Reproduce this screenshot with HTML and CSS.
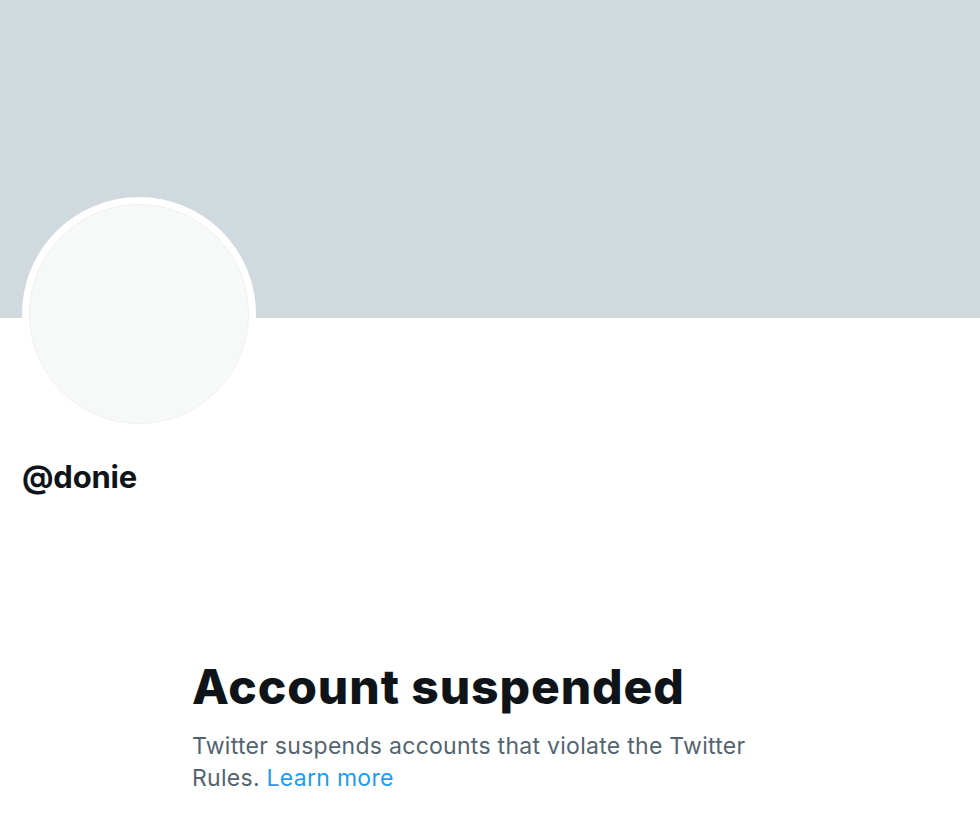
FILE: index.html
```html
<!DOCTYPE html>
<html lang="en">
<head>
<meta charset="utf-8">
<title>@donie</title>
<link rel="stylesheet" href="styles.css">
</head>
<body>
<div class="page">
  <div class="banner"></div>
  <div class="profile">
    <div class="avatar"><div class="avatar-inner"></div></div>
    <div class="handle">@donie</div>
  </div>
  <div class="empty">
    <h1 class="empty-title">Account suspended</h1>
    <p class="empty-text">Twitter suspends accounts that violate the Twitter Rules. <a class="link" href="#">Learn more</a></p>
  </div>
</div>
</body>
</html>
```
FILE: styles.css
```css
html, body {
  margin: 0;
  padding: 0;
  background: #ffffff;
}
.page {
  width: 980px;
  height: 840px;
  overflow: hidden;
  font-family: Inter, "Liberation Sans", sans-serif;
}
.banner {
  height: 318px;
  background: #cfd9de;
}
.profile {
  padding-left: 22px;
}
.avatar {
  width: 234px;
  height: 234px;
  margin-top: -121px;
  border-radius: 50%;
  background: #ffffff;
  display: flex;
  align-items: center;
  justify-content: center;
}
.avatar-inner {
  width: 218px;
  height: 218px;
  border-radius: 50%;
  background: #f7f9f9;
  border: 1px solid #eef1f2;
}
.handle {
  margin-top: 26px;
  font-size: 31px;
  line-height: 40px;
  font-weight: 700;
  color: #0f1419;
  letter-spacing: -0.2px;
}
.empty {
  padding-left: 192px;
  margin-top: 162px;
  width: 580px;
}
.empty-title {
  margin: 0;
  font-size: 48px;
  line-height: 56px;
  font-weight: 800;
  color: #0f1419;
  letter-spacing: 0.9px;
}
.empty-text {
  margin: 15px 0 0;
  font-size: 23px;
  line-height: 32px;
  color: #536471;
  letter-spacing: 0.28px;
}
.link {
  color: #1d9bf0;
  text-decoration: none;
}
```
